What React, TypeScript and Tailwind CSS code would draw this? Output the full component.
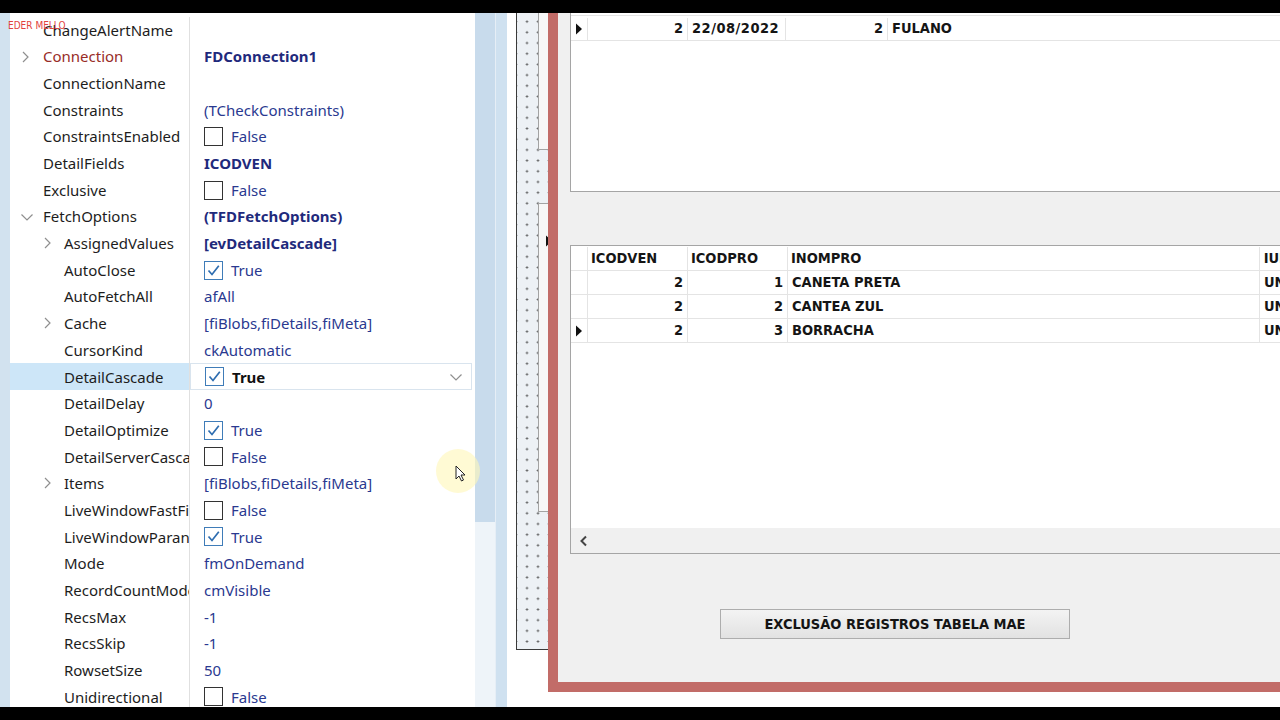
import React from 'react';

// Fontes: propriedades em estilo Segoe, grids em estilo Tahoma
const UI_FONT = '"Noto Sans", "Open Sans", sans-serif';
const GRID_FONT = '"DejaVu Sans Condensed", "DejaVu Sans", sans-serif';

type Prop = {
    name: string;
    level?: 0 | 1;
    toggle?: 'closed' | 'open';
    red?: boolean;
    value?: string;
    bold?: boolean;
    check?: boolean;
    selected?: boolean;
};

const properties: Prop[] = [
    { name: 'ChangeAlertName' },
    { name: 'Connection', toggle: 'closed', red: true, value: 'FDConnection1', bold: true },
    { name: 'ConnectionName' },
    { name: 'Constraints', value: '(TCheckConstraints)' },
    { name: 'ConstraintsEnabled', check: false, value: 'False' },
    { name: 'DetailFields', value: 'ICODVEN', bold: true },
    { name: 'Exclusive', check: false, value: 'False' },
    { name: 'FetchOptions', toggle: 'open', value: '(TFDFetchOptions)', bold: true },
    { name: 'AssignedValues', level: 1, toggle: 'closed', value: '[evDetailCascade]', bold: true },
    { name: 'AutoClose', level: 1, check: true, value: 'True' },
    { name: 'AutoFetchAll', level: 1, value: 'afAll' },
    { name: 'Cache', level: 1, toggle: 'closed', value: '[fiBlobs,fiDetails,fiMeta]' },
    { name: 'CursorKind', level: 1, value: 'ckAutomatic' },
    { name: 'DetailCascade', level: 1, check: true, value: 'True', selected: true },
    { name: 'DetailDelay', level: 1, value: '0' },
    { name: 'DetailOptimize', level: 1, check: true, value: 'True' },
    { name: 'DetailServerCascade', level: 1, check: false, value: 'False' },
    { name: 'Items', level: 1, toggle: 'closed', value: '[fiBlobs,fiDetails,fiMeta]' },
    { name: 'LiveWindowFastFirst', level: 1, check: false, value: 'False' },
    { name: 'LiveWindowParanoic', level: 1, check: true, value: 'True' },
    { name: 'Mode', level: 1, value: 'fmOnDemand' },
    { name: 'RecordCountMode', level: 1, value: 'cmVisible' },
    { name: 'RecsMax', level: 1, value: '-1' },
    { name: 'RecsSkip', level: 1, value: '-1' },
    { name: 'RowsetSize', level: 1, value: '50' },
    { name: 'Unidirectional', level: 1, check: false, value: 'False' },
];

const itens = [
    { ven: 2, pro: 1, nome: 'CANETA PRETA' },
    { ven: 2, pro: 2, nome: 'CANTEA ZUL' },
    { ven: 2, pro: 3, nome: 'BORRACHA', current: true },
];

function ChevronRight() {
    return (
        <svg width="10" height="14" viewBox="0 0 10 14" className="shrink-0">
            <path d="M3 2 L8 7 L3 12" fill="none" stroke="#8f8f8f" strokeWidth="1.2" />
        </svg>
    );
}

function ChevronDown() {
    return (
        <svg width="14" height="10" viewBox="0 0 14 10" className="shrink-0">
            <path d="M1.5 2.5 L7 8 L12.5 2.5" fill="none" stroke="#8f8f8f" strokeWidth="1.2" />
        </svg>
    );
}

function CheckBox({ checked }: { checked: boolean }) {
    return checked ? (
        <div className="flex h-[19px] w-[19px] shrink-0 items-center justify-center border border-[#3f7cb8] bg-white">
            <svg width="15" height="15" viewBox="0 0 15 15">
                <path d="M2.5 7.5 L6 11.5 L12.8 2.8" fill="none" stroke="#2e6db0" strokeWidth="1.7" />
            </svg>
        </div>
    ) : (
        <div className="h-[19px] w-[19px] shrink-0 border border-[#333] bg-white" />
    );
}

function Indicator() {
    return (
        <svg width="8" height="12" viewBox="0 0 8 12">
            <path d="M1 0.5 L7 6 L1 11.5 Z" fill="#111" />
        </svg>
    );
}

function PropRow({ p }: { p: Prop }) {
    const lead = p.level === 1 ? 'w-[54px] pl-[32px]' : 'w-[33px] pl-[10px]';
    return (
        <div className="flex h-[26.68px] shrink-0 items-center">
            <div className={`flex h-full w-[180px] shrink-0 items-center overflow-hidden border-r border-[#e0e0e0] whitespace-nowrap ${p.selected ? 'bg-[#cde6f8]' : ''}`}>
                <div className={`flex shrink-0 items-center ${lead}`}>
                    {p.toggle === 'closed' && <ChevronRight />}
                    {p.toggle === 'open' && <ChevronDown />}
                </div>
                <span className={p.red ? 'text-[#982c27]' : 'text-[#1d1d1d]'}>{p.name}</span>
            </div>
            <div className={`flex h-full flex-1 items-center pl-[14px] ${p.selected ? 'mr-[3px] border border-[#d9e4ee] pl-[13px] pr-[8px]' : ''}`}>
                {p.check !== undefined && (
                    <div className="mr-[8px]">
                        <CheckBox checked={p.check} />
                    </div>
                )}
                {p.value && (
                    <span className={p.selected ? 'font-bold text-[#111]' : p.bold ? 'font-bold text-[#1f2a7c]' : 'text-[#2a3990]'}>{p.value}</span>
                )}
                {p.selected && (
                    <div className="ml-auto">
                        <ChevronDown />
                    </div>
                )}
            </div>
        </div>
    );
}

export default function App() {
    return (
        <div className="relative flex h-[720px] w-[1280px] flex-col overflow-hidden bg-black">
            {/* Barra preta superior */}
            <div className="h-[13px] shrink-0 bg-black" />

            <div className="flex h-[694px] shrink-0 overflow-hidden">
                {/* Margem azul */}
                <div className="w-[10px] shrink-0 bg-[#d2e2ef]" />

                {/* Object Inspector */}
                <div className="flex w-[465px] shrink-0 flex-col overflow-hidden bg-white pt-[3.7px] text-[15px]" style={{ fontFamily: UI_FONT }}>
                    {properties.map((p) => (
                        <PropRow key={p.name} p={p} />
                    ))}
                </div>

                {/* Scrollbar */}
                <div className="flex w-[20px] shrink-0 flex-col">
                    <div className="h-[509px] bg-[#c8dbec]" />
                    <div className="flex-1 bg-[#eef4f9]" />
                </div>
                <div className="w-[12px] shrink-0 border-l border-[#e6eef6] bg-[#cfe1f0]" />
                <div className="w-[9px] shrink-0 bg-white" />

                {/* Designer (grade pontilhada) */}
                <div className="flex w-[32px] shrink-0 flex-col">
                    <div className="flex h-[637px] border-b border-l border-[#3a3a3a] bg-[#edf1f5] bg-[radial-gradient(circle,#4a4a4a_0.8px,transparent_1.3px)] [background-position:4.5px_3.3px] [background-size:11px_10.7px]">
                        <div className="w-[21px] shrink-0" />
                        <div className="flex w-[10px] flex-col">
                            <div className="h-[137px] border-b border-l border-[#a3a3a3] bg-[#f7f7f7]" />
                            <div className="h-[53px]" />
                            <div className="flex h-[309px] flex-col border-y border-l border-[#a3a3a3] bg-[#f7f7f7] pt-[31px] pl-[6px]">
                                <Indicator />
                            </div>
                        </div>
                    </div>
                    <div className="flex-1 bg-white" />
                </div>

                {/* Form */}
                <div className="flex w-[732px] shrink-0 flex-col">
                    <div className="flex h-[679px] flex-col border-b-[10px] border-l-[10px] border-[#c26c68] bg-[#f0f0f0] pl-[12px] [font-stretch:condensed]" style={{ fontFamily: GRID_FONT }}>
                        {/* Grid mestre */}
                        <div className="flex h-[179px] w-[720px] shrink-0 flex-col border-b border-l border-[#a5a5a5] bg-white text-[14.5px] font-bold text-[#151515]">
                            <div className="h-[3px] border-b border-[#e4e4e4]" />
                            <div className="flex h-[25px] items-center border-b border-[#e4e4e4] pt-[2px]">
                                <div className="flex h-full w-[17px] items-center justify-center border-r border-[#e4e4e4]">
                                    <Indicator />
                                </div>
                                <div className="flex h-full w-[100px] items-center justify-end border-r border-[#e4e4e4] pr-[4px]">2</div>
                                <div className="flex h-full w-[98px] items-center border-r border-[#e4e4e4] pl-[4px] tracking-[0.5px]">22/08/2022</div>
                                <div className="flex h-full w-[102px] items-center justify-end border-r border-[#e4e4e4] pr-[4px]">2</div>
                                <div className="flex h-full flex-1 items-center pl-[4px]">FULANO</div>
                            </div>
                        </div>

                        {/* Grid detalhe */}
                        <div className="mt-[53px] flex h-[309px] w-[720px] shrink-0 flex-col border-y border-l border-[#a5a5a5] bg-white text-[14.5px] font-bold text-[#151515]">
                            <div className="flex h-[25px] shrink-0 items-center border-b border-[#e4e4e4] pt-[1px]">
                                <div className="h-full w-[17px] border-r border-[#e4e4e4]" />
                                <div className="flex h-full w-[100px] items-center border-r border-[#e4e4e4] pl-[3px]">ICODVEN</div>
                                <div className="flex h-full w-[100px] items-center border-r border-[#e4e4e4] pl-[3px]">ICODPRO</div>
                                <div className="flex h-full w-[472px] items-center border-r border-[#e4e4e4] pl-[3px]">INOMPRO</div>
                                <div className="flex h-full flex-1 items-center pl-[4px]">IUN</div>
                            </div>
                            {itens.map((it) => (
                                <div key={it.pro} className="flex h-[24px] shrink-0 items-center border-b border-[#e4e4e4]">
                                    <div className="flex h-full w-[17px] items-center justify-center border-r border-[#e4e4e4]">{it.current && <Indicator />}</div>
                                    <div className="flex h-full w-[100px] items-center justify-end border-r border-[#e4e4e4] pr-[4px]">{it.ven}</div>
                                    <div className="flex h-full w-[100px] items-center justify-end border-r border-[#e4e4e4] pr-[4px]">{it.pro}</div>
                                    <div className="flex h-full w-[472px] items-center border-r border-[#e4e4e4] pl-[4px]">{it.nome}</div>
                                    <div className="flex h-full flex-1 items-center pl-[4px]">UN</div>
                                </div>
                            ))}
                            <div className="flex-1" />
                            <div className="flex h-[25px] shrink-0 items-center bg-[#f0f0f0] pl-[8px]">
                                <svg width="10" height="12" viewBox="0 0 10 12">
                                    <path d="M7 1.5 L2.5 6 L7 10.5" fill="none" stroke="#444" strokeWidth="2" />
                                </svg>
                            </div>
                        </div>

                        {/* Botão */}
                        <button className="mt-[55px] ml-[150px] flex h-[30px] w-[350px] shrink-0 items-center justify-center border border-[#adadad] bg-gradient-to-b from-[#f3f3f3] to-[#e2e2e2] pt-[1px] text-[14.5px] font-bold text-[#141414]">
                            EXCLUSÃO REGISTROS TABELA MAE
                        </button>
                    </div>
                    <div className="flex-1 bg-white" />
                </div>
            </div>

            {/* Barra preta inferior */}
            <div className="h-[13px] shrink-0 bg-black" />

            {/* Marca d'água */}
            <div className="absolute top-[21px] left-[8px] text-[10px] leading-none text-[#e2423d] [font-stretch:condensed]" style={{ fontFamily: GRID_FONT }}>
                EDER MELLO
            </div>

            {/* Cursor com destaque */}
            <div className="absolute top-[449px] left-[436px] h-[44px] w-[44px] rounded-full bg-[#fff7b8]/60" />
            <svg className="absolute top-[465px] left-[455px]" width="11" height="17" viewBox="0 0 11 17">
                <path d="M1 1 L1 14 L4 11 L6.5 16 L8.5 15 L6 10 L10 10 Z" fill="#fff" stroke="#222" strokeWidth="1" />
            </svg>
        </div>
    );
}
